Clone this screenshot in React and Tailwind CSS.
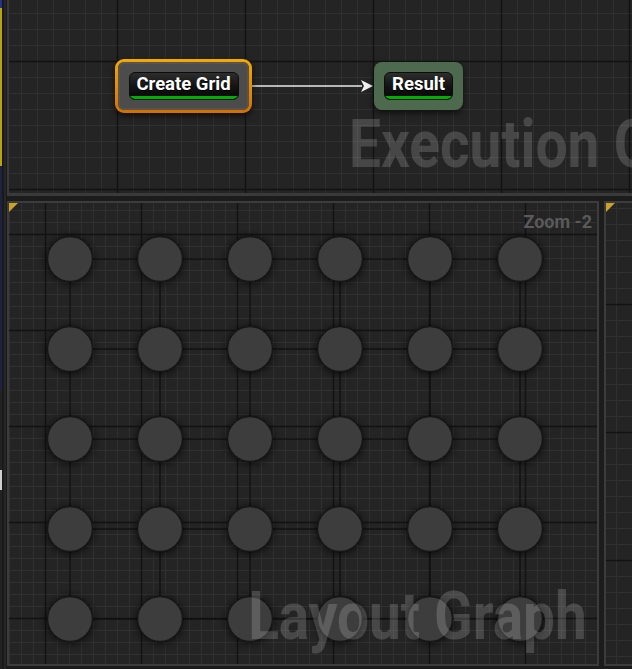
import React from "react";

function Grid({ w, h, step, ox, oy, mx, my, majorStep, minorColor = "#303030", majorColor = "#121212" }) {
  const lines = [];
  for (let x = ox; x <= w; x += step) {
    const major = majorStep && ((x - mx) % majorStep + majorStep) % majorStep === 0;
    lines.push(
      <line key={"v" + x} x1={x + 0.5} y1={0} x2={x + 0.5} y2={h} stroke={major ? majorColor : minorColor} strokeWidth={major ? 1.3 : 1} />
    );
  }
  for (let y = oy; y <= h; y += step) {
    const major = majorStep && ((y - my) % majorStep + majorStep) % majorStep === 0;
    lines.push(
      <line key={"h" + y} x1={0} y1={y + 0.5} x2={w} y2={y + 0.5} stroke={major ? majorColor : minorColor} strokeWidth={major ? 1.3 : 1} />
    );
  }
  const minors = lines.filter((l) => l.props.stroke === minorColor);
  const majors = lines.filter((l) => l.props.stroke !== minorColor);
  return (
    <svg className="absolute inset-0" width={w} height={h}>
      {minors}
      {majors}
    </svg>
  );
}

function Pill({ label, width }) {
  return (
    <div
      className={`relative h-[28px] ${width} rounded-[6px] border border-[#0c0c0c] bg-gradient-to-b from-[#2e2e2e] via-[#141414] to-[#070707] overflow-hidden flex items-start justify-center`}
    >
      <span className="mt-[1px] text-[18.5px] font-bold leading-[21px] text-white [text-shadow:0_1px_1px_#000]">{label}</span>
      <div className="absolute bottom-0 left-0 right-0 h-[3px] bg-[#00b000]" />
    </div>
  );
}

export default function App() {
  const cols = [0, 1, 2, 3, 4, 5];
  const rows = [0, 1, 2, 3, 4];
  const cx = (i) => 61 + 90 * i;
  const cy = (j) => 56 + 90 * j;
  return (
    <div className="flex h-[669px] w-[632px] overflow-hidden bg-[#1c1c1c] font-['Roboto',_sans-serif]">
      {/* left edge strip */}
      <div className="flex w-[7px] shrink-0">
        <div className="flex w-[2px] flex-col">
          <div className="h-[8px] bg-[#23328a]" />
          <div className="h-[158px] bg-[#b8a412]" />
          <div className="h-[224px] bg-[#1d2240]" />
          <div className="h-[80px] bg-[#222]" />
          <div className="h-[20px] bg-[#cfcfcf]" />
          <div className="flex-1 bg-[#222]" />
        </div>
        <div className="w-[2px] bg-[#1a1a1a]" />
        <div className="w-[2px] bg-[#262626]" />
        <div className="w-[1px] bg-[#1a1a1a]" />
      </div>

      {/* main */}
      <div className="flex flex-1 flex-col">
        {/* top panel */}
        <div className="relative h-[196px] shrink-0 overflow-hidden border-b-[3px] border-l-2 border-[#3a3a3a] bg-[#242424]">
          <Grid w={623} h={193} step={16} ox={12} oy={13} mx={108} my={61} majorStep={128} />
          <svg className="absolute inset-0" width={623} height={193}>
            <line x1={243} y1={86} x2={353} y2={86} stroke="#e8e8e8" strokeWidth={1.6} />
            <polygon points="364,86 352,80 355,86 352,92" fill="#f0f0f0" />
          </svg>
          {/* Create Grid node */}
          <div className="absolute left-[106px] top-[59px] h-[54px] w-[137px] rounded-[9px] bg-gradient-to-b from-[#f3aa00] to-[#d27000] p-[3px] shadow-[0_3px_6px_rgba(0,0,0,0.6)]">
            <div className="flex h-full items-center justify-center rounded-[6px] bg-[#4c4c4c] shadow-[inset_0_0_0_2px_#58534c]">
              <Pill label="Create Grid" width="w-[110px]" />
            </div>
          </div>
          {/* Result node */}
          <div className="absolute left-[365px] top-[62px] flex h-[48px] w-[89px] items-center justify-center rounded-[8px] bg-[#4e6a4e] shadow-[0_3px_6px_rgba(0,0,0,0.6)]">
            <Pill label="Result" width="w-[69px]" />
          </div>
          <div className="absolute left-[340px] top-[112px] origin-left scale-x-[0.86] whitespace-nowrap text-[66px] font-bold leading-none text-white/[0.16]">
            Execution Graph
          </div>
        </div>

        {/* bottom row */}
        <div className="mt-[5px] flex h-[465px] gap-[5px]">
          <div className="relative w-[592px] shrink-0 overflow-hidden border-2 border-[#3c3c3c] bg-[#242424]">
            <Grid w={588} h={461} step={12} ox={0} oy={7} mx={36} my={31} majorStep={96} />
            <svg className="absolute inset-0" width={588} height={461}>
              <defs>
                <filter id="sh" x="-50%" y="-50%" width="200%" height="200%">
                  <feDropShadow dx="0" dy="1" stdDeviation="4" floodColor="#000" floodOpacity="0.7" />
                </filter>
              </defs>
              {rows.map((j) => (
                <line key={"r" + j} x1={cx(0)} y1={cy(j)} x2={cx(5)} y2={cy(j)} stroke="#121212" strokeWidth={1.5} />
              ))}
              {cols.map((i) => (
                <line key={"c" + i} x1={cx(i)} y1={cy(0)} x2={cx(i)} y2={cy(4)} stroke="#121212" strokeWidth={1.5} />
              ))}
              {rows.map((j) =>
                cols.map((i) => (
                  <circle key={i + "-" + j} cx={cx(i)} cy={cy(j)} r={22.5} fill="#3c3c3c" stroke="#161616" strokeWidth={1.5} filter="url(#sh)" />
                ))
              )}
            </svg>
            <div className="absolute left-0 top-0 h-0 w-0 border-r-[9px] border-t-[9px] border-r-transparent border-t-[#c9a227]" />
            <div className="absolute right-[5px] top-[10px] whitespace-nowrap text-[18px] font-bold leading-none text-[#5a5a5a]">
              Zoom -2
            </div>
            <div className="absolute right-[10px] top-[381px] origin-right scale-x-[0.86] whitespace-nowrap text-[66px] font-bold leading-none text-white/[0.17]">
              Layout Graph
            </div>
          </div>
          <div className="relative flex-1 overflow-hidden border-y-2 border-l-2 border-[#3c3c3c] bg-[#242424]">
            <Grid w={26} h={461} step={16} ox={10} oy={5} mx={1000} my={101} majorStep={128} />
            <div className="absolute left-0 top-0 h-0 w-0 border-r-[9px] border-t-[9px] border-r-transparent border-t-[#c9a227]" />
          </div>
        </div>
      </div>
    </div>
  );
}
